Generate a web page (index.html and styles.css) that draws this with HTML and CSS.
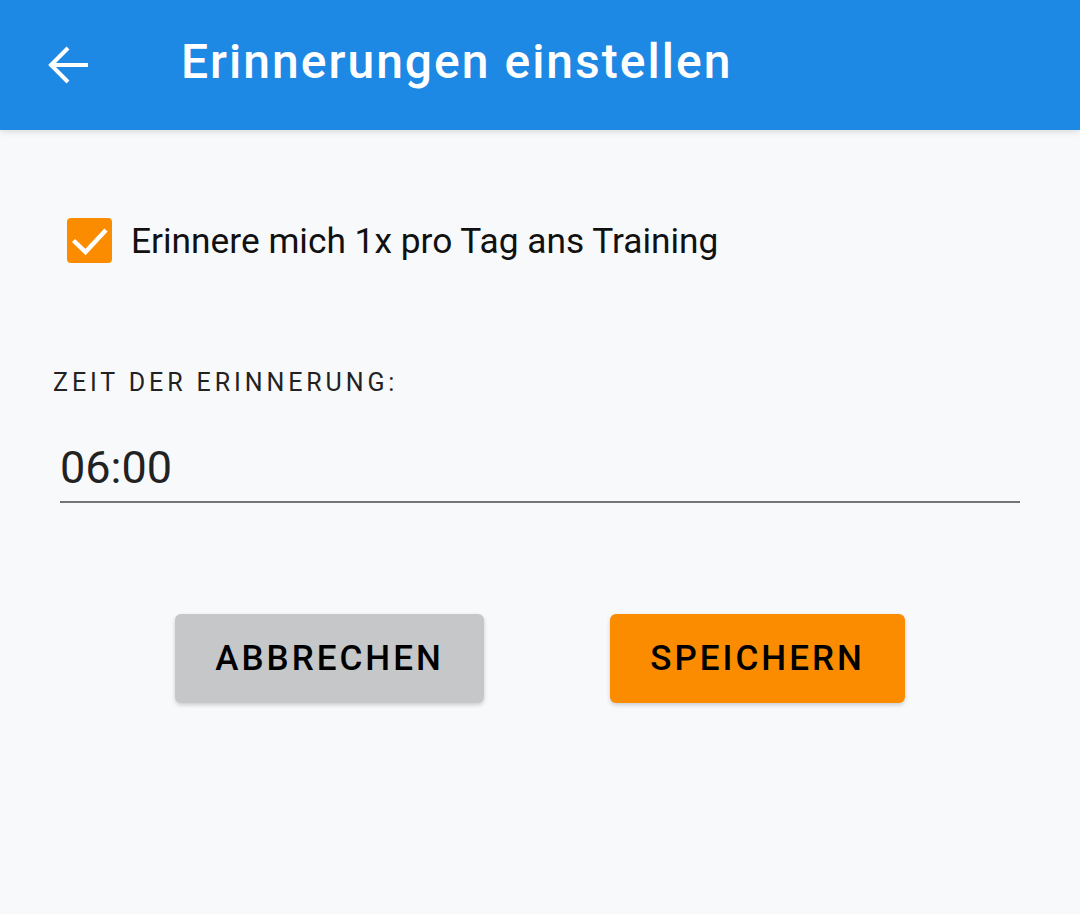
FILE: index.html
```html
<!DOCTYPE html>
<html lang="de">
<head>
<meta charset="utf-8">
<title>Erinnerungen einstellen</title>
<link rel="stylesheet" href="styles.css">
</head>
<body>
<header class="appbar">
  <button class="back" aria-label="Zurück">
    <svg viewBox="0 0 40 40" width="40" height="40"><path d="M40 20H3M20 3L3 20l17 17" fill="none" stroke="#fff" stroke-width="4"/></svg>
  </button>
  <h1 class="title">Erinnerungen einstellen</h1>
</header>
<main class="content">
  <label class="check-row">
    <span class="checkbox">
      <svg viewBox="0 0 45 45" width="45" height="45"><path d="M6.5 22.5L18.5 34L39 12" fill="none" stroke="#fff" stroke-width="4.5"/></svg>
    </span>
    <span class="check-text">Erinnere mich 1x pro Tag ans Training</span>
  </label>
  <div class="field-label">ZEIT DER ERINNERUNG:</div>
  <div class="time-field">06:00</div>
  <div class="actions">
    <button class="btn btn-cancel">ABBRECHEN</button>
    <button class="btn btn-save">SPEICHERN</button>
  </div>
</main>
</body>
</html>
```
FILE: styles.css
```css
* { box-sizing: border-box; }
html, body { margin: 0; padding: 0; }
body {
  background: #f8f9fb;
  font-family: Roboto, "Liberation Sans", sans-serif;
  width: 1080px;
  height: 914px;
  overflow: hidden;
}
.appbar {
  height: 130px;
  background: #1e88e5;
  display: flex;
  align-items: center;
  box-shadow: 0 2px 6px rgba(0,0,0,0.12);
  position: relative;
}
.back {
  background: none;
  border: 0;
  padding: 0;
  margin-left: 48px;
  width: 40px;
  height: 40px;
  display: flex;
}
.title {
  margin: 0 0 0 93px;
  color: #fff;
  font-family: Roboto, sans-serif;
  font-weight: 500;
  font-size: 48px;
  letter-spacing: 2px;
  line-height: 1;
  position: relative;
  top: -3px;
}
.content {
  padding: 88px 60px 0 53px;
}
.check-row {
  display: flex;
  align-items: center;
  margin-left: 14px;
}
.checkbox {
  width: 45px;
  height: 45px;
  background: #fb8c00;
  border-radius: 4px;
  display: flex;
}
.check-text {
  margin-left: 19px;
  font-size: 35.3px;
  color: #111;
}
.field-label {
  margin-top: 105px;
  font-size: 25px;
  letter-spacing: 3.9px;
  color: #222;
}
.time-field {
  margin: 46px 0 0 7px;
  font-size: 45px;
  color: #222;
  border-bottom: 2px solid #757575;
  padding-bottom: 8px;
  line-height: 50px;
}
.actions {
  display: flex;
  gap: 126px;
  margin-top: 111px;
  padding-left: 122px;
}
.btn {
  height: 89px;
  border: 0;
  border-radius: 6px;
  font-family: Roboto, sans-serif;
  font-size: 35px;
  font-weight: 500;
  letter-spacing: 3px;
  color: #000;
  box-shadow: 0 2px 4px rgba(0,0,0,0.18);
  padding: 0;
}
.btn-cancel { width: 309px; background: #c6c7c9; }
.btn-save { width: 295px; background: #fb8c00; }
```
